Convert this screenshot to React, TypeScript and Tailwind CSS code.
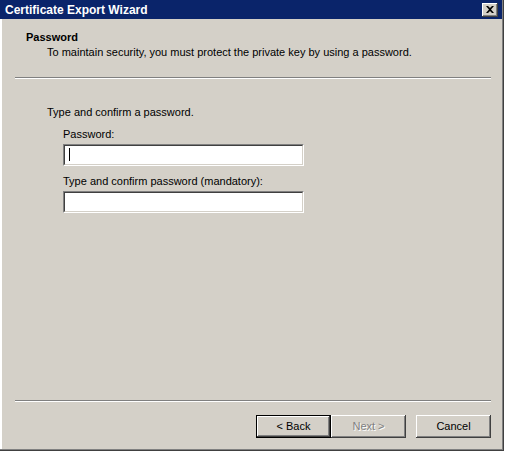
import React from "react";

const font = "font-['Tahoma','Liberation_Sans',sans-serif]";

function Field() {
  return (
    <div className="w-[241px] h-[22px] border border-t-[#808080] border-l-[#808080] border-b-white border-r-white">
      <div className="w-full h-full border border-t-[#404040] border-l-[#404040] border-b-[#d4d0c8] border-r-[#d4d0c8] bg-white" />
    </div>
  );
}

function Separator() {
  return (
    <div className="mx-[15px] w-[476px]">
      <div className="h-px bg-[#808080]" />
      <div className="h-px bg-white" />
    </div>
  );
}

export default function App() {
  return (
    <div className={`w-[512px] h-[455px] bg-white text-[11px] leading-[13px] text-black ${font}`}>
      <div className="relative w-[504px] h-[451px] bg-[#d4d0c8] shadow-[inset_-1px_-1px_0_#404040,inset_-2px_-2px_0_#808080,inset_2px_0_0_#ffffff,inset_1px_0_0_#d4d0c8] flex flex-col">
        {/* title bar */}
        <div className="h-[19px] mr-[2px] bg-[#0a246a] flex items-center justify-between pl-[5px] pr-[4px]">
          <span className="text-white font-bold text-[12px] leading-[14px]">Certificate Export Wizard</span>
          <div className="w-[16px] h-[14px] bg-[#d4d0c8] shadow-[inset_-1px_-1px_0_#404040,inset_1px_1px_0_#ffffff,inset_-2px_-2px_0_#808080] flex items-center justify-center">
            <svg width="8" height="7" viewBox="0 0 8 7" className="mb-px">
              <path d="M0 0h2l2 2 2-2h2L5 3.5 8 7H6L4 5 2 7H0l3-3.5z" fill="#000" />
            </svg>
          </div>
        </div>

        {/* header */}
        <div className="pt-[12px] pl-[26px]">
          <div className="font-bold">Password</div>
          <div className="pl-[21px] mt-[2px]">To maintain security, you must protect the private key by using a password.</div>
        </div>
        <div className="mt-[18px]">
          <Separator />
        </div>

        {/* body */}
        <div className="pl-[47px] pt-[27px] flex flex-col">
          <div>Type and confirm a password.</div>
          <div className="pl-[16px] flex flex-col">
            <div className="mt-[9px]">Password:</div>
            <div className="mt-[3px] relative">
              <Field />
              <div className="absolute left-[6px] top-[4px] w-px h-[13px] bg-black" />
            </div>
            <div className="mt-[9px]">Type and confirm password (mandatory):</div>
            <div className="mt-[3px]">
              <Field />
            </div>
          </div>
        </div>

        <div className="flex-1" />
        <Separator />

        {/* buttons */}
        <div className="flex pl-[256px] mt-[13px] mb-[13px]">
          <div className="w-[75px] h-[23px] border border-black">
            <div className="w-full h-full shadow-[inset_-1px_-1px_0_#404040,inset_1px_1px_0_#ffffff,inset_-2px_-2px_0_#808080] flex items-center justify-center">
              &lt; Back
            </div>
          </div>
          <div className="w-[75px] h-[23px] shadow-[inset_-1px_-1px_0_#404040,inset_1px_1px_0_#ffffff,inset_-2px_-2px_0_#808080] flex items-center justify-center text-[#808080] [text-shadow:1px_1px_0_#ffffff]">
            Next &gt;
          </div>
          <div className="ml-[10px] w-[75px] h-[23px] shadow-[inset_-1px_-1px_0_#404040,inset_1px_1px_0_#ffffff,inset_-2px_-2px_0_#808080] flex items-center justify-center">
            Cancel
          </div>
        </div>
      </div>
    </div>
  );
}
